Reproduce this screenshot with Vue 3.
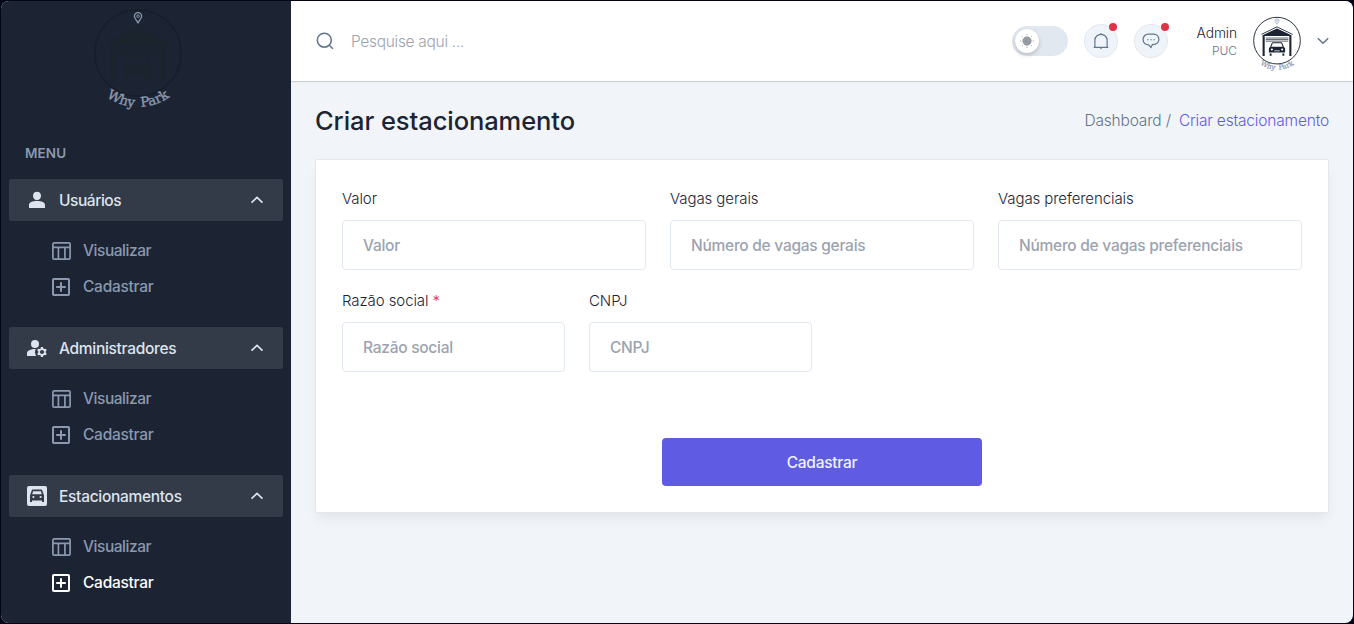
<script setup>
import { ref } from 'vue'

const groups = ref([
  { key: 'users', label: 'Usuários', active: null },
  { key: 'admins', label: 'Administradores', active: null },
  { key: 'parking', label: 'Estacionamentos', active: 'create' },
])
const search = ref('')
const price = ref('')
const general = ref('')
const preferential = ref('')
const company = ref('')
const cnpj = ref('')
</script>

<template>
  <div class="shell">
    <svg class="defs" width="0" height="0">
      <defs>
        <symbol id="mark" viewBox="0 0 100 112">
          <circle class="ring" cx="50" cy="53" r="43.2" fill="none" stroke-width="1.7" />
          <path d="M21 41.5 50 27.5 79 41.5" fill="none" stroke="currentColor" stroke-width="1.6" />
          <path d="M23.3 43 50 30.5 76.7 43V81.5H72.8V44.5H27.2V81.5H23.3Z" fill="currentColor" />
          <path d="M29 48.2H71M29 51H71M29 54H71" stroke="currentColor" stroke-width="1.3" />
          <path d="M38.2 65 41 57.8Q41.4 57 42.3 57H57.7Q58.6 57 59 57.8L61.8 65" fill="none" stroke="currentColor" stroke-width="1.9" />
          <path fill-rule="evenodd" d="M37.5 64.3H62.5L65 67V75H35V67ZM40.5 67.5A2 2 0 1 0 40.5 71.5 2 2 0 1 0 40.5 67.5ZM59.5 67.5A2 2 0 1 0 59.5 71.5 2 2 0 1 0 59.5 67.5ZM45 71.2V72.7H55V71.2Z" fill="currentColor" />
          <path d="M36.5 77H40V81H36.5ZM60 77H63.5V81H60Z" fill="currentColor" />
          <path d="M50 22.8C48.2 20 46.4 18.3 46.4 16.2A3.6 3.6 0 0 1 53.6 16.2C53.6 18.3 51.8 20 50 22.8Z" fill="none" stroke="#8a99af" stroke-width="1.3" />
          <circle cx="50" cy="16.2" r="1.3" fill="none" stroke="#8a99af" stroke-width=".9" />
          <path id="arc" d="M-4 53A54 54 0 0 0 104 53" fill="none" />
          <text class="mark-text" fill="#8a99af" text-anchor="middle"><textPath href="#arc" startOffset="50%">Why Park</textPath></text>
        </symbol>
      </defs>
    </svg>

    <aside class="sidebar">
      <svg class="brand" width="100" height="112"><use href="#mark" /></svg>
      <h3 class="menu-title">MENU</h3>
      <nav>
        <section v-for="g in groups" :key="g.key" class="group">
          <a class="group-head">
            <svg class="head-icon" viewBox="0 0 24 24">
              <path v-if="g.key === 'users'" d="M12 3.8C9.6 3.8 8 5.4 8 7.8 8 10.400 9.700 12.200 12 12.200S16 10.400 16 7.800C16 5.400 14.400 3.800 12 3.800ZM4 20V16.800C4 14.300 7.400 12.900 12 12.900S20 14.300 20 16.800V20Z" />
              <template v-else-if="g.key === 'admins'">
                <circle cx="10" cy="8" r="4" />
                <path d="M10.670 13.020C10.450 13.010 10.230 13 10 13c-2.420 0-4.680.670-6.610 1.820-.880.520-1.390 1.500-1.390 2.530V20h9.260c-.790-1.130-1.260-2.510-1.260-4 0-1.070.250-2.070.670-2.980zM20.750 16c0-.220-.030-.420-.060-.630l1.140-1.010-1-1.730-1.450.490c-.320-.270-.680-.480-1.080-.630L18 11h-2l-.3 1.490c-.4.150-.760.360-1.080.630l-1.450-.490-1 1.730 1.140 1.010c-.030.210-.060.410-.060.630s.030.420.060.630l-1.140 1.010 1 1.730 1.450-.490c.320.270.680.480 1.080.630L16 21h2l.3-1.490c.4-.150.760-.360 1.080-.630l1.450.490 1-1.730-1.140-1.010c.030-.210.060-.410.060-.630zM17 18c-1.100 0-2-.9-2-2s.9-2 2-2 2 .9 2 2-.9 2-2 2z" />
              </template>
              <template v-else>
                <rect x="2" y="2" width="20" height="20" rx="2" />
                <path class="cut" fill-rule="evenodd" d="M7.800 5.600H16.200Q17 5.600 17.300 6.400L19 11.400V18H17V16.400H7V18H5V11.400L6.700 6.400Q7 5.600 7.800 5.600ZM8.100 7.300 7.200 10.200H16.800L15.900 7.300ZM8.400 11.900A1.100 1.100 0 1 0 8.400 14.100 1.100 1.100 0 1 0 8.400 11.900ZM15.600 11.900A1.100 1.100 0 1 0 15.600 14.100 1.100 1.100 0 1 0 15.600 11.900Z" />
              </template>
            </svg>
            <span :class="['head-label', g.key]">{{ g.label }}</span>
            <svg class="caret" viewBox="0 0 20 20"><path d="M4.500 12.600 10 7.400 15.500 12.600" /></svg>
          </a>
          <ul>
            <li>
              <svg class="item-icon" viewBox="0 0 20 20"><rect x=".9" y="1.900" width="17.200" height="16.200" rx="1.200" /><path d="M1 6.400H18M6.400 6.400V18M12.900 6.400V18" /></svg>
              <span class="view-label">Visualizar</span>
            </li>
            <li :class="{ active: g.active === 'create' }">
              <svg class="item-icon plus" viewBox="0 0 20 20"><rect x="1" y="2" width="16" height="16" rx=".8" /><path d="M4.200 10H13.800M9 5.200V14.800" /></svg>
              <span class="create-label">Cadastrar</span>
            </li>
          </ul>
        </section>
      </nav>
    </aside>

    <div class="content">
      <header>
        <svg class="search-icon" viewBox="0 0 20 20"><circle cx="9.300" cy="9.200" r="7" /><path d="M14.300 14.200 17.900 17.800" /></svg>
        <input v-model="search" class="search" placeholder="Pesquise aqui ..." />
        <div class="toggle">
          <span class="knob">
            <svg viewBox="0 0 16 16"><circle cx="8" cy="8" r="4.200" /><path d="M8 1v1.300M8 13.700V15M1 8h1.300M13.700 8H15M3 3l.9.9M12.100 12.100l.9.9M3 13l.9-.9M12.100 3.900 13 3" /></svg>
          </span>
        </div>
        <div class="round">
          <svg viewBox="0 0 18 18"><path d="M9 1V2.500M2.900 15V8A6.100 5.700 0 0 1 15.100 8V15M1.700 15.400H16.300M9 15.500V17.200" /></svg>
          <i />
        </div>
        <div class="round chat">
          <svg viewBox="0 0 18 18"><path d="M6.200 2.200H11.800A5 5 0 0 1 16.900 7.200 5 5 0 0 1 12 12.400L10.400 12.600 9 15.500 6.600 12.900A5.300 5.300 0 0 1 1.100 7.400 5.200 5.200 0 0 1 6.200 2.200Z" /><path class="dots" d="M5.200 7.800H6.600M8.300 7.800H9.700M11.400 7.800H12.800" /></svg>
          <i />
        </div>
        <div class="user"><b>Admin</b><small>PUC</small></div>
        <svg class="avatar" width="54" height="60.500"><use href="#mark" /></svg>
        <svg class="chevron" viewBox="0 0 12 8"><path d="M.8 1.200 6 6.300 11.200 1.200" /></svg>
      </header>

      <main>
        <div class="heading">
          <h2>Criar estacionamento</h2>
          <p><span>Dashboard /</span><a>Criar estacionamento</a></p>
        </div>
        <form class="card" @submit.prevent>
          <div class="row">
            <label class="field"><span>Valor</span><input v-model="price" placeholder="Valor" /></label>
            <label class="field"><span>Vagas gerais</span><input v-model="general" placeholder="Número de vagas gerais" /></label>
            <label class="field"><span>Vagas preferenciais</span><input v-model="preferential" placeholder="Número de vagas preferenciais" /></label>
          </div>
          <div class="row quarters">
            <label class="field"><span>Razão social <em>*</em></span><input v-model="company" placeholder="Razão social" /></label>
            <label class="field"><span>CNPJ</span><input v-model="cnpj" placeholder="CNPJ" /></label>
          </div>
          <button type="submit">Cadastrar</button>
        </form>
      </main>
    </div>
  </div>
</template>

<style>
body { background: #010516; }
</style>

<style scoped>
* { box-sizing: border-box; }
.shell { width: 1352px; height: 622px; margin: 1px; display: flex; overflow: hidden; border-radius: 8px; background: #f1f5f9; font-family: Inter, "Open Sans", sans-serif; }
.shell input, .shell button { font-family: inherit; }
.defs { position: absolute; }
.ring { stroke: var(--ring); }
.mark-text { font: 400 13.500px "DejaVu Serif", serif; stroke: #8a99af; stroke-width: .35px; word-spacing: 3px; letter-spacing: -.2px; }

.sidebar { width: 290px; flex: none; background: #1c2434; padding: 0 8px; color: #8a99af; }
.brand { --ring: #171e2b; display: block; margin: -1px 0 0 79px; color: #1b232c; }
.menu-title { margin: 31px 0 0 16px; font-size: 13.500px; line-height: 20px; font-weight: 600; letter-spacing: .1px; }
nav { margin-top: 16px; }
.group { height: 148px; }
.group-head { display: flex; align-items: center; height: 42px; padding: 0 16px; border-radius: 2px; background: #333a48; color: #dee4ee; font-size: 15.500px; font-weight: 500; }
.head-icon { width: 24px; height: 24px; margin-right: 10px; fill: currentColor; }
.head-icon .cut { fill: #333a48; }
.caret { width: 20px; height: 20px; margin-left: auto; fill: none; stroke: currentColor; stroke-width: 1.700; }
.head-label { letter-spacing: -.3px; }
.head-label.users { letter-spacing: -.45px; }
ul { list-style: none; margin: 11px 0 0; padding: 0 0 0 42px; }
li { display: flex; align-items: center; height: 36px; font-size: 15.500px; font-weight: 450; letter-spacing: -.27px; }
li.active { color: #fff; font-weight: 500; }
.view-label { letter-spacing: -.45px; }
.item-icon { width: 20px; height: 20px; margin: 1px 12px 0 1px; fill: none; stroke: currentColor; stroke-width: 1.700; }
.item-icon.plus { stroke-width: 2; }
li span { margin-left: -1px; }

.content { flex: 1; min-width: 0; }
header { height: 80px; display: flex; align-items: center; padding: 0 24px; background: #fff; box-shadow: 0 1px 1px rgba(0, 0, 0, .14); }
.search-icon { width: 20px; height: 20px; fill: none; stroke: #64748b; stroke-width: 1.600; }
.search { width: 400px; margin-left: 14px; padding: 0 2px; border: 0; outline: 0; font-size: 15.500px; font-weight: 300; letter-spacing: -.3px; }
input::placeholder { color: #9ca3af; opacity: 1; }
.toggle { width: 56px; height: 30px; margin-left: auto; padding: 3px; border-radius: 15px; background: #e2e8f0; }
.knob { display: grid; place-items: center; width: 24px; height: 24px; border-radius: 50%; background: #fff; box-shadow: 0 2px 4px rgba(0, 0, 0, .2); }
.knob svg { width: 16px; height: 16px; fill: #969aa1; stroke: #969aa1; stroke-width: .8; }
.round { position: relative; display: grid; place-items: center; width: 34px; height: 34px; margin-left: 16px; border: 1px solid #e2e8f0; border-radius: 50%; background: #eff4fb; }
.round svg { width: 18px; height: 18px; fill: none; stroke: #64748b; stroke-width: 1.200; }
.round .dots { stroke-width: 1.100; }
.round i { position: absolute; top: -2px; right: 0; width: 8px; height: 8px; border-radius: 50%; background: #dc3545; }
.round.chat i { right: -2px; }
.user { width: 69px; display: flex; flex-direction: column; align-items: flex-end; padding-top: 2px; }
.user b { font-size: 13.800px; line-height: 17px; font-weight: 350; letter-spacing: -.1px; color: #1c2434; }
.user small { font-size: 12px; line-height: 17px; font-weight: 300; color: #64748b; }
.avatar { --ring: #1c2434; flex: none; margin: 3px 0 0 13px; color: #1c2434; }
.chevron { width: 12px; height: 8px; margin-left: 13px; fill: none; stroke: #64748b; stroke-width: 1.500; }

main { padding: 24px; }
.heading { display: flex; justify-content: space-between; align-items: center; height: 32px; }
h2 { margin: 0; font-size: 25.500px; font-weight: 550; line-height: 32px; letter-spacing: -.08px; color: #1c2434; }
.heading p { margin: -2px 0 0; font-size: 15.500px; font-weight: 300; letter-spacing: -.18px; color: #64748b; }
.heading a { margin-left: 8px; color: #5f5ce3; }
.card { margin-top: 22px; height: 354px; padding: 26px; border: 1px solid #e2e8f0; border-radius: 2px; background: #fff; box-shadow: 0 8px 13px -3px rgba(0, 0, 0, .07); }
.row { display: grid; grid-template-columns: repeat(3, 304px); gap: 24px; height: 102px; }
.row.quarters { grid-template-columns: repeat(2, 223px); }
.field span { display: block; height: 34px; line-height: 26px; font-size: 15px; font-weight: 300; letter-spacing: -.08px; color: #1c2434; }
.field em { color: #dc3545; font-style: normal; }
.field input { display: block; width: 100%; height: 50px; padding: 0 20px; border: 1px solid #e2e8f0; border-radius: 4px; background: #fff; outline: 0; font-size: 15.500px; font-weight: 450; letter-spacing: -.26px; }
button { display: block; width: 320px; height: 48px; margin: 48px auto 0; border: 0; border-radius: 4px; background: #5f5ce3; color: #eff4fb; font-size: 15.500px; font-weight: 500; letter-spacing: -.25px; }
</style>
